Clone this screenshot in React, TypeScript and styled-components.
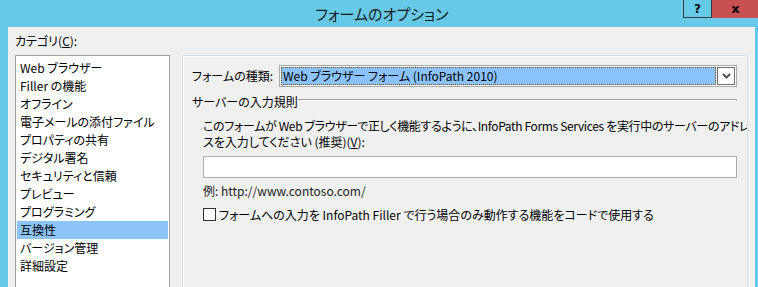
import styled, { createGlobalStyle } from "styled-components";

const categories = [
  "Web ブラウザー",
  "Filler の機能",
  "オフライン",
  "電子メールの添付ファイル",
  "プロパティの共有",
  "デジタル署名",
  "セキュリティと信頼",
  "プレビュー",
  "プログラミング",
  "互換性",
  "バージョン管理",
  "詳細設定",
];

const selected = "互換性";

export default function App() {
  return (
    <>
      <Global />
      <Window>
        <TitleBar>
          <Title>フォームのオプション</Title>
          <Caption>
            <HelpButton>?</HelpButton>
            <CloseButton>x</CloseButton>
          </Caption>
        </TitleBar>
        <Body>
          <CategoryLabel>
            カテゴリ(<u>C</u>):
          </CategoryLabel>
          <Main>
            <List>
              {categories.map((c) => (
                <Item key={c} active={c === selected}>
                  {c}
                </Item>
              ))}
            </List>
            <Panel>
              <FormRow>
                <FieldLabel>フォームの種類:</FieldLabel>
                <Select>
                  <SelectValue>Web ブラウザー フォーム (InfoPath 2010)</SelectValue>
                  <DropButton>
                    <svg width="9" height="6" viewBox="0 0 9 6">
                      <path d="M1 1 L4.5 4.5 L8 1" stroke="#555" strokeWidth="2" fill="none" />
                    </svg>
                  </DropButton>
                </Select>
              </FormRow>
              <Group>
                <span>サーバーの入力規則</span>
                <Rule />
              </Group>
              <Indent>
                <Para>
                  <Line tight>このフォームが Web ブラウザーで正しく機能するように、InfoPath Forms Services を実行中のサーバーのアドレ</Line>
                  <Line>
                    スを入力してください (推奨)(<u>V</u>):
                  </Line>
                </Para>
                <TextBox />
                <Example>例: http://www.contoso.com/</Example>
                <CheckRow>
                  <Check />
                  <span>フォームへの入力を InfoPath Filler で行う場合のみ動作する機能をコードで使用する</span>
                </CheckRow>
              </Indent>
            </Panel>
          </Main>
        </Body>
      </Window>
    </>
  );
}

const Global = createGlobalStyle`
  html, body {
    margin: 0;
    padding: 0;
    overflow: hidden;
  }
  body {
    font-family: "Noto Sans CJK JP", sans-serif;
    font-feature-settings: "palt";
    font-size: 12px;
    color: #000;
  }
`;

const Window = styled.div`
  width: 758px;
  height: 287px;
  background: #66c9e8;
  display: flex;
  flex-direction: column;
  overflow: hidden;
`;

const TitleBar = styled.div`
  height: 27px;
  position: relative;
  display: flex;
  align-items: center;
  justify-content: center;
  flex-shrink: 0;
`;

const Title = styled.div`
  font-size: 15px;
  color: #1a1a1a;
  margin-left: 6px;
`;

const Caption = styled.div`
  position: absolute;
  top: 0;
  left: 683px;
  display: flex;
`;

const HelpButton = styled.div`
  width: 27px;
  height: 17px;
  border: 1px solid #3a3a3a;
  border-top: none;
  display: flex;
  align-items: center;
  justify-content: center;
  font-family: "DejaVu Sans", sans-serif;
  font-weight: bold;
  font-size: 12px;
  line-height: 1;
`;

const CloseButton = styled.div`
  width: 47px;
  height: 18px;
  background: #c75050;
  display: flex;
  align-items: center;
  justify-content: center;
  font-family: "DejaVu Sans", sans-serif;
  font-weight: bold;
  font-size: 13px;
  line-height: 1;
  color: #000;
  padding-bottom: 1px;
  box-sizing: border-box;
`;

const Body = styled.div`
  flex: 1;
  margin: 0 3px 0 8px;
  background: #f0f0f0;
  padding: 7px 7px 0 7px;
  display: flex;
  flex-direction: column;
  min-height: 0;
`;

const CategoryLabel = styled.div`
  height: 21px;
  line-height: 14px;
`;

const Main = styled.div`
  flex: 1;
  display: flex;
  gap: 12px;
  min-height: 0;
`;

const List = styled.div`
  width: 155px;
  flex-shrink: 0;
  box-sizing: border-box;
  background: #fff;
  border: 1px solid #a0a0a0;
  border-bottom: none;
  padding: 3px 1px 0 1px;
  display: flex;
  flex-direction: column;
`;

const Item = styled.div<{ active?: boolean }>`
  height: 18px;
  line-height: 18px;
  padding-left: 3px;
  white-space: nowrap;
  background: ${(p) => (p.active ? "#8cc4fb" : "transparent")};
`;

const Panel = styled.div`
  flex: 1;
  min-width: 0;
  overflow: hidden;
  border: 1px solid #d5dfe5;
  border-bottom: none;
  box-shadow: inset 1px 1px 0 #fff;
  padding: 8px 10px 0 9px;
  display: flex;
  flex-direction: column;
`;

const FormRow = styled.div`
  display: flex;
  align-items: center;
  height: 23px;
`;

const FieldLabel = styled.span`
  width: 87px;
  white-space: nowrap;
  flex-shrink: 0;
`;

const Select = styled.div`
  width: 459px;
  height: 22px;
  box-sizing: border-box;
  border: 1px solid #a8a8a8;
  background: #fff;
  display: flex;
  padding: 1px;
  gap: 1px;
`;

const SelectValue = styled.div`
  flex: 1;
  background: #8ac3ff;
  outline: 1px dotted #7a4a1a;
  outline-offset: -1px;
  padding-left: 2px;
  line-height: 18px;
  white-space: nowrap;
`;

const DropButton = styled.div`
  width: 18px;
  box-sizing: border-box;
  border: 1px solid #707070;
  background: #fff;
  display: flex;
  align-items: center;
  justify-content: center;
`;

const Group = styled.div`
  display: flex;
  align-items: center;
  height: 20px;
  margin-top: 4px;
`;

const Rule = styled.div`
  flex: 1;
  height: 1px;
  background: #a0a0a0;
  border-bottom: 1px solid #fff;
  margin-top: -2px;
`;

const Indent = styled.div`
  padding-left: 11px;
  display: flex;
  flex-direction: column;
`;

const Para = styled.div`
  margin-top: 7px;
  line-height: 16px;
`;

const Line = styled.div<{ tight?: boolean }>`
  white-space: nowrap;
  letter-spacing: ${(p) => (p.tight ? "-0.35px" : "0")};
`;

const TextBox = styled.div`
  margin-top: 6px;
  height: 22px;
  box-sizing: border-box;
  border: 1px solid #ababab;
  background: #fff;
`;

const Example = styled.div`
  margin-top: 5px;
  line-height: 15px;
  color: #222;
`;

const CheckRow = styled.div`
  margin-top: 9px;
  display: flex;
  align-items: center;
  gap: 3px;
  line-height: 15px;
`;

const Check = styled.div`
  width: 13px;
  height: 13px;
  box-sizing: border-box;
  border: 1px solid #333;
  background: #fff;
`;
